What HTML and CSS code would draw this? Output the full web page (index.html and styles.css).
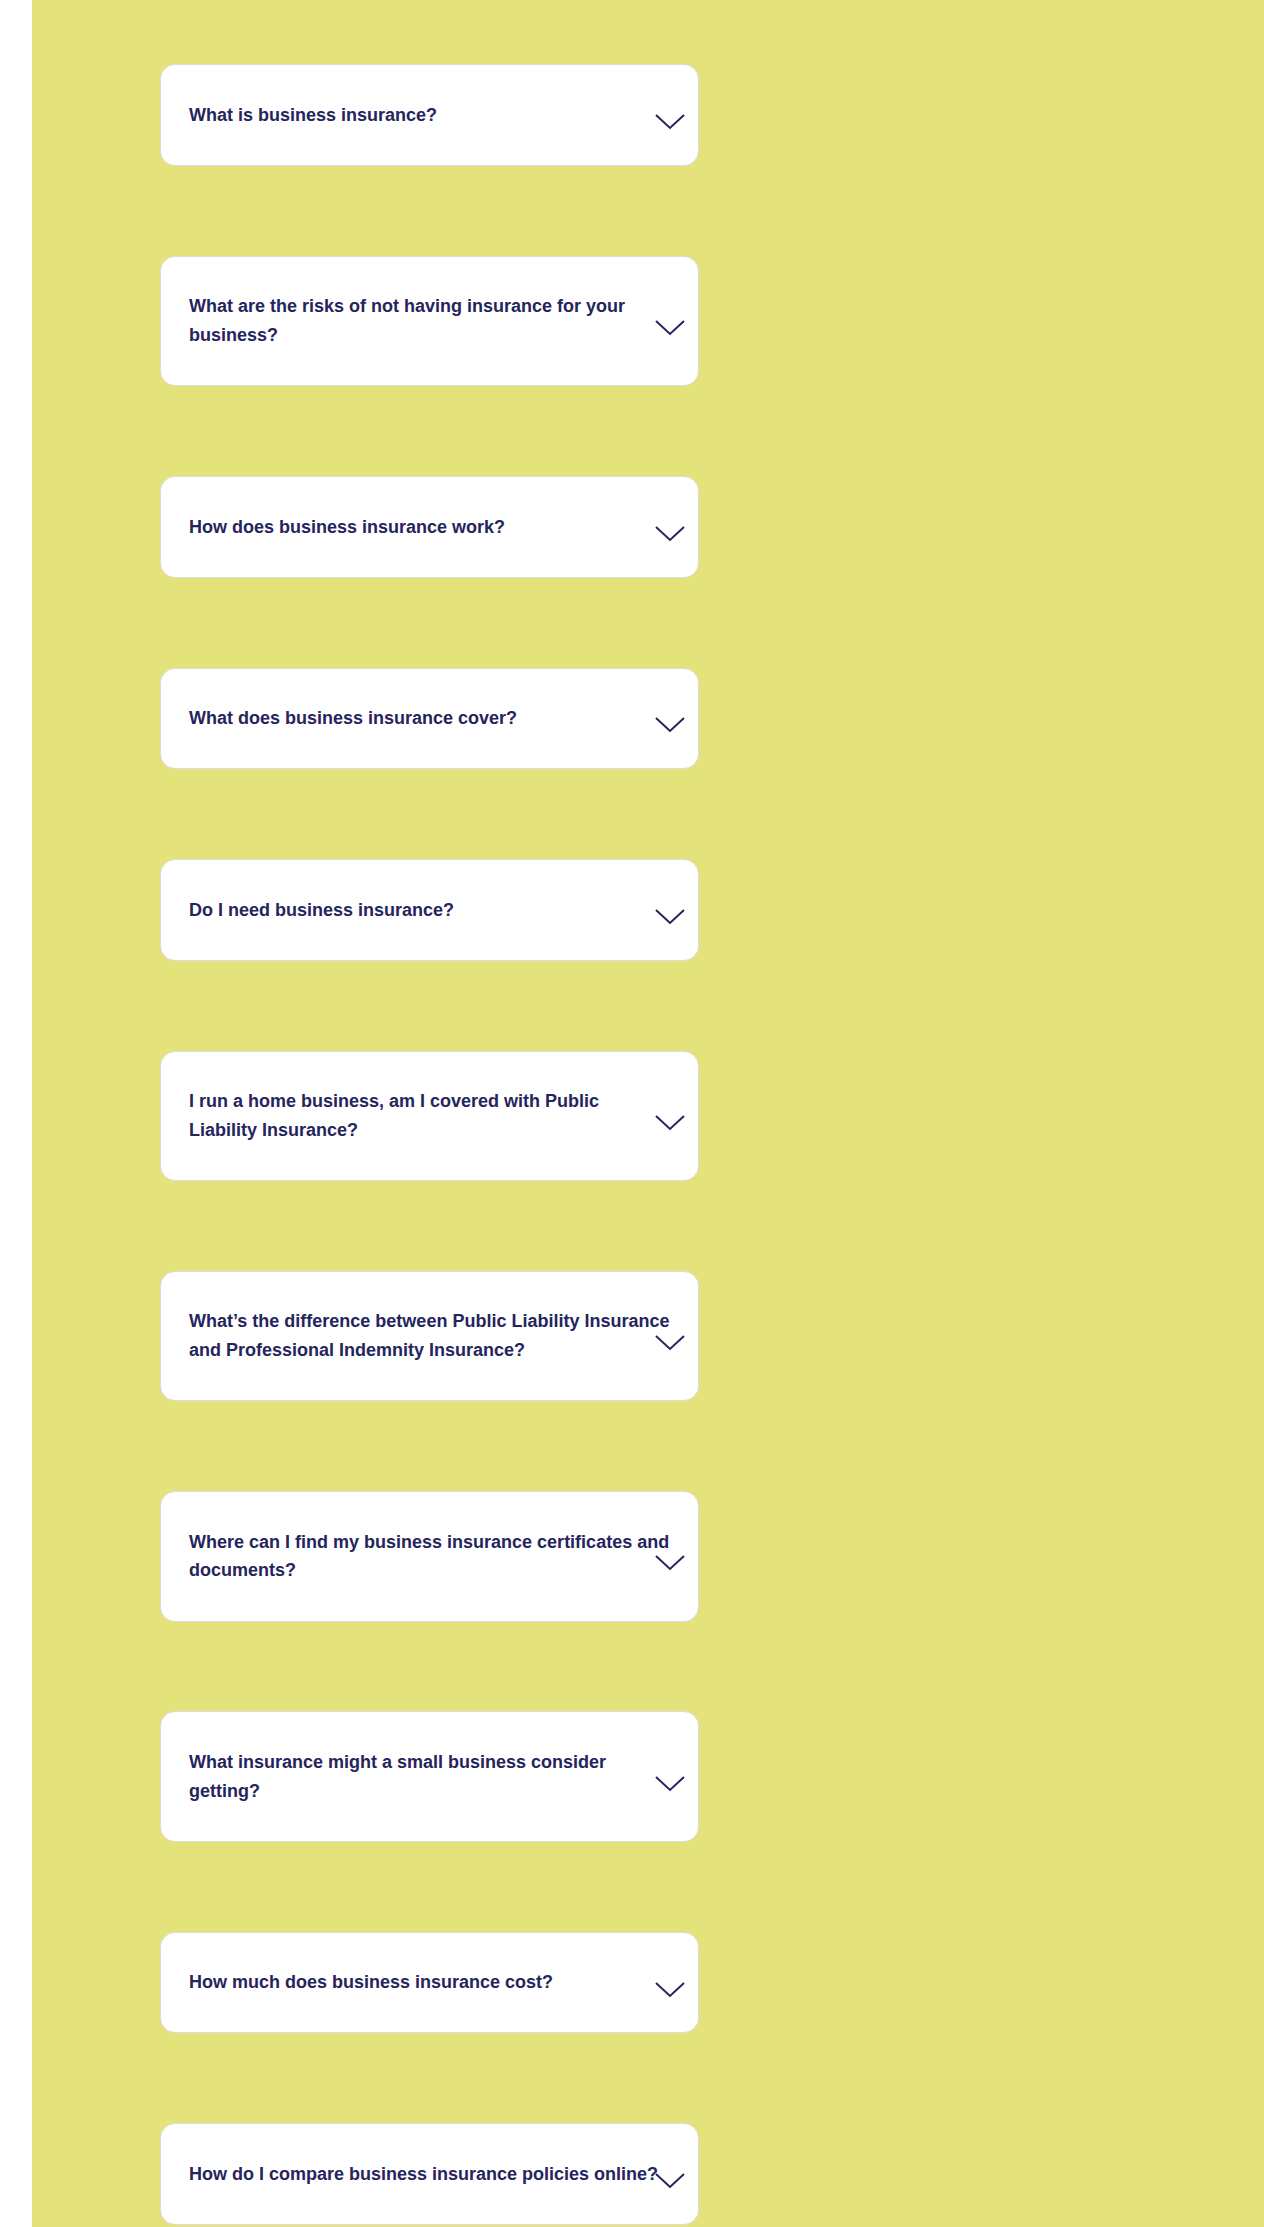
FILE: index.html
```html
<!DOCTYPE html>
<html lang="en">
<head>
<meta charset="utf-8">
<title>Business insurance FAQ</title>
<link rel="stylesheet" href="styles.css">
</head>
<body>
<section class="faq">
  <div class="faq-item"><p class="faq-q">What is business insurance?</p><svg class="chev" viewBox="0 0 30 15"><polyline points="1,1 15,14 29,1"/></svg></div>
  <div class="faq-item"><p class="faq-q">What are the risks of not having insurance for your business?</p><svg class="chev" viewBox="0 0 30 15"><polyline points="1,1 15,14 29,1"/></svg></div>
  <div class="faq-item"><p class="faq-q">How does business insurance work?</p><svg class="chev" viewBox="0 0 30 15"><polyline points="1,1 15,14 29,1"/></svg></div>
  <div class="faq-item"><p class="faq-q">What does business insurance cover?</p><svg class="chev" viewBox="0 0 30 15"><polyline points="1,1 15,14 29,1"/></svg></div>
  <div class="faq-item"><p class="faq-q">Do I need business insurance?</p><svg class="chev" viewBox="0 0 30 15"><polyline points="1,1 15,14 29,1"/></svg></div>
  <div class="faq-item"><p class="faq-q">I run a home business, am I covered with Public Liability Insurance?</p><svg class="chev" viewBox="0 0 30 15"><polyline points="1,1 15,14 29,1"/></svg></div>
  <div class="faq-item"><p class="faq-q">What’s the difference between Public Liability Insurance and Professional Indemnity Insurance?</p><svg class="chev" viewBox="0 0 30 15"><polyline points="1,1 15,14 29,1"/></svg></div>
  <div class="faq-item"><p class="faq-q">Where can I find my business insurance certificates and documents?</p><svg class="chev" viewBox="0 0 30 15"><polyline points="1,1 15,14 29,1"/></svg></div>
  <div class="faq-item"><p class="faq-q">What insurance might a small business consider getting?</p><svg class="chev" viewBox="0 0 30 15"><polyline points="1,1 15,14 29,1"/></svg></div>
  <div class="faq-item"><p class="faq-q">How much does business insurance cost?</p><svg class="chev" viewBox="0 0 30 15"><polyline points="1,1 15,14 29,1"/></svg></div>
  <div class="faq-item"><p class="faq-q">How do I compare business insurance policies online?</p><svg class="chev" viewBox="0 0 30 15"><polyline points="1,1 15,14 29,1"/></svg></div>
</section>
</body>
</html>
```

FILE: styles.css
```css
html, body {
  margin: 0;
  padding: 0;
  background: #ffffff;
}

body {
  font-family: "Liberation Sans", Arial, sans-serif;
  min-height: 2227px;
}

.faq {
  margin-left: 32px;
  min-height: 2227px;
  background: #e4e37b;
  padding: 64.3px 0 0 128px;
  box-sizing: border-box;
  display: flex;
  flex-direction: column;
  gap: 89.7px;
}

.faq-item {
  position: relative;
  width: 539px;
  box-sizing: border-box;
  background: #ffffff;
  border: 1px solid #dcdcdc;
  border-radius: 15px;
  padding: 35.5px 28px;
}

.faq-q {
  margin: 0;
  font-size: 18px;
  font-weight: 700;
  line-height: 28.8px;
  color: #25255e;
}

.chev {
  position: absolute;
  right: 13px;
  top: calc(50% - 1px);
  width: 30px;
  height: 15px;
  fill: none;
  stroke: #25255e;
  stroke-width: 2;
  overflow: visible;
}
```
